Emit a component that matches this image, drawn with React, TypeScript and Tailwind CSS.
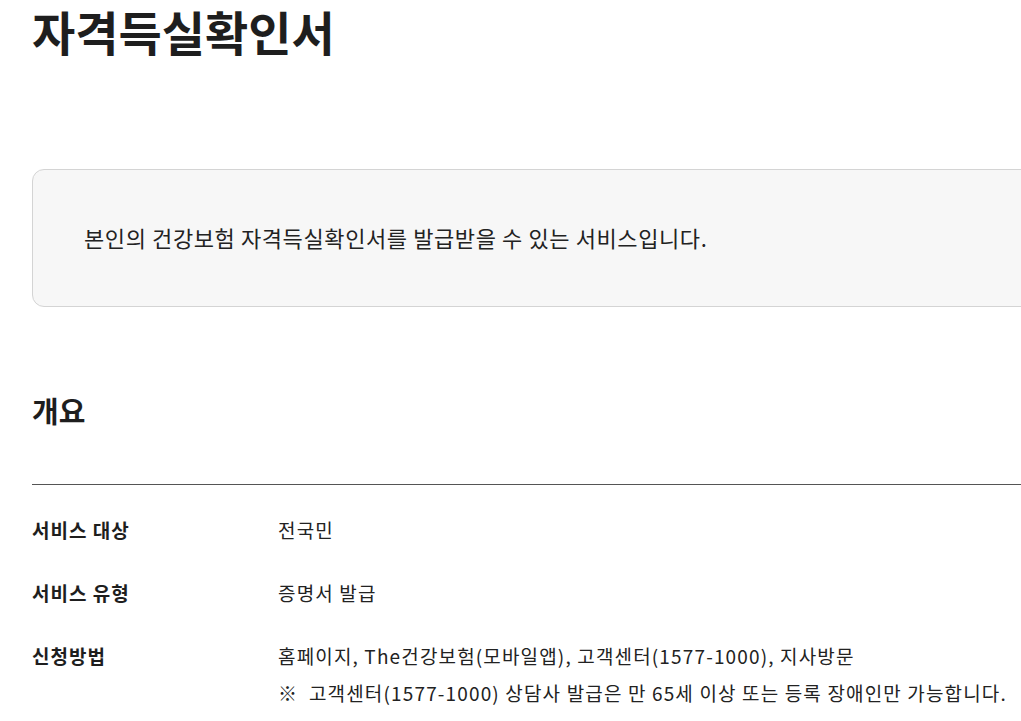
import React from 'react';

const rows = [
  { label: '서비스 대상', value: ['전국민'] },
  { label: '서비스 유형', value: ['증명서 발급'] },
  {
    label: '신청방법',
    value: [
      '홈페이지, The건강보험(모바일앱), 고객센터(1577-1000), 지사방문',
      '※  고객센터(1577-1000) 상담사 발급은 만 65세 이상 또는 등록 장애인만 가능합니다.',
    ],
  },
];

export default function App() {
  return (
    <div className="w-full h-[721px] overflow-hidden bg-white text-[#1e1e1e] font-['Noto_Sans_CJK_KR','Noto_Sans',sans-serif]">
      <div className="w-[1200px] pl-8">
        {/* Page title */}
        <h1 className="text-[47px] font-bold leading-[62px]">자격득실확인서</h1>

        {/* Summary box */}
        <div className="mt-[107px] h-[138px] flex items-center pl-[51px] bg-[#f7f7f7] border border-[#d4d4d4] rounded-[12px]">
          <p className="text-[22px] leading-[30px] tracking-[0.6px] text-[#222] -mt-[3px]">
            본인의 건강보험 자격득실확인서를 발급받을 수 있는 서비스입니다.
          </p>
        </div>

        {/* Overview */}
        <h2 className="mt-[84px] text-[29px] font-bold leading-[38px]">개요</h2>
        <div className="mt-[55px] border-t border-[#555]" />

        <dl className="pt-[26px] flex flex-col gap-[26px]">
          {rows.map((row) => (
            <div key={row.label} className="flex">
              <dt className="w-[246px] shrink-0 text-[19px] font-bold leading-[37px] tracking-[1px]">{row.label}</dt>
              <dd className="flex flex-col text-[19px] leading-[37px] tracking-[1.15px] text-[#222]">
                {row.value.map((v) => (
                  <span key={v} className="whitespace-pre">{v}</span>
                ))}
              </dd>
            </div>
          ))}
        </dl>
      </div>
    </div>
  );
}
